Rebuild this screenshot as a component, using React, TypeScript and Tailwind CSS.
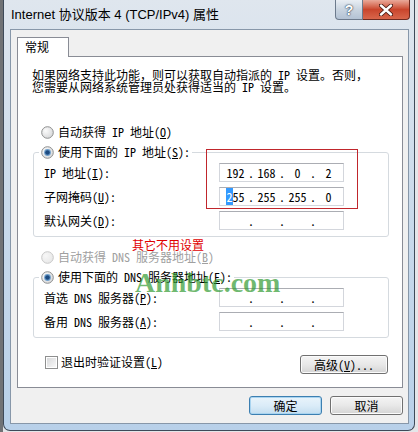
import { Fragment, type ReactNode } from "react";

// body text uses a half-width latin CJK face so "IP"/"DNS" get 6px cells
const ui = "font-['Noto_Sans_Mono_CJK_SC','Noto_Sans_CJK_SC',sans-serif] text-[12px] leading-[14px] text-black";

function Radio({ checked, disabled }: { checked?: boolean; disabled?: boolean }) {
  return (
    <svg width="13" height="13" viewBox="0 0 13 13" className="shrink-0">
      <defs>
        <radialGradient id={disabled ? "rgd" : "rg"} cx="0.35" cy="0.35" r="0.8">
          <stop offset="0" stopColor={disabled ? "#f7f7f7" : "#fbfbfb"} />
          <stop offset="1" stopColor={disabled ? "#e6e6e6" : "#d2d3d5"} />
        </radialGradient>
      </defs>
      <circle cx="6.5" cy="6.5" r="5.8" fill={`url(#${disabled ? "rgd" : "rg"})`} stroke={disabled ? "#c8c8c8" : "#8e8f8f"} strokeWidth="1" />
      {checked && (
        <>
          <circle cx="6.5" cy="6.5" r="3.4" fill="#6f9fcb" />
          <circle cx="6.5" cy="6.5" r="2.3" fill="#1b4a80" />
        </>
      )}
    </svg>
  );
}

function Check() {
  return (
    <div className="h-[13px] w-[13px] shrink-0 border border-[#8e8f8f] bg-white p-px">
      <div className="h-full w-full bg-linear-to-br from-[#d8d9db] to-[#f8f8f8]" />
    </div>
  );
}

function IpBox({ parts }: { parts?: ReactNode[] }) {
  const p = parts ?? ["", "", "", ""];
  return (
    <div className="flex h-[19px] w-[125px] items-center border border-[#d3d6dc] border-t-[#abadb3] bg-white pl-[3px]">
      {p.map((v, i) => (
        <Fragment key={i}>
          {i > 0 && <span className="w-[6px] text-center">.</span>}
          <span className="w-[25px] text-center">{v}</span>
        </Fragment>
      ))}
    </div>
  );
}

function Field({ label, parts }: { label: ReactNode; parts?: ReactNode[] }) {
  return (
    <div className="flex h-[19px] items-center">
      <span className="w-[175px]">{label}</span>
      <IpBox parts={parts} />
    </div>
  );
}

function Group({ legend, children }: { legend: ReactNode; children: ReactNode }) {
  return (
    <div className="ml-[15px] mt-[13px] w-[356px] rounded-[3px] border border-[#d5dadf] pb-[6px]">
      <div className="-mt-[8px] ml-[5px] flex h-[14px] w-fit items-center gap-[4px] bg-white px-[2px]">
        <Radio checked />
        <span>{legend}</span>
      </div>
      <div className="mt-[4px] flex flex-col gap-[5px] pl-[10px]">{children}</div>
    </div>
  );
}

function Button({ children, primary, className }: { children: ReactNode; primary?: boolean; className?: string }) {
  return (
    <div
      className={`flex h-[19px] items-center justify-center rounded-[3px] border ${
        primary
          ? "border-[#3c7fb1] bg-linear-to-b from-[#e9f4fb] via-[#dbecf8] to-[#c4def0] shadow-[inset_0_0_0_1px_#a9d4f0]"
          : "border-[#707070] bg-linear-to-b from-[#f4f4f4] via-[#e8e8e8] to-[#d4d4d4] shadow-[inset_0_0_0_1px_#fbfbfb]"
      } ${className ?? ""}`}
    >
      {children}
    </div>
  );
}

export default function App() {
  return (
    <div className="flex h-[432px] w-[418px] overflow-hidden bg-[#e4e6e9]">
      <div className="h-full w-[3px] bg-[#707275]" />

      {/* window frame */}
      <div className="flex h-[431px] w-[412px] flex-col rounded-b-[7px] border-x border-b border-[#3e4a59] bg-linear-to-b from-[#dfe6ee] via-[#c9daeb] to-[#b8d0e9]">
        {/* caption */}
        <div className="flex h-[29px] items-start">
          <span className="ml-[7px] mt-[7px] font-['Liberation_Sans','Noto_Sans_CJK_SC',sans-serif] text-[13px] leading-[15px] text-black">
            Internet 协议版本 4 (TCP/IPv4) 属性
          </span>
          <div className="ml-auto mr-[4px] flex">
            <div className="flex h-[20px] w-[28px] items-center justify-center rounded-bl-[4px] border border-t-0 border-[#6c7a8c] bg-linear-to-b from-[#e9eef4] via-[#c9d4e0] to-[#b3c2d4]">
              <span className="font-['Liberation_Sans',sans-serif] text-[14px] font-bold leading-none text-white [text-shadow:0_0_2px_#22364c,0_0_1px_#22364c]">
                ?
              </span>
            </div>
            <div className="flex h-[20px] w-[47px] items-center justify-center rounded-br-[4px] border border-l-0 border-t-0 border-[#6e2a20] bg-linear-to-b from-[#e9a99a] via-[#c9452c] to-[#d8664b]">
              <svg width="14" height="12" viewBox="0 0 14 12">
                <path d="M2 1.5 L12 10.5 M12 1.5 L2 10.5" stroke="#4a1a12" strokeWidth="4.2" strokeLinecap="round" />
                <path d="M2 1.5 L12 10.5 M12 1.5 L2 10.5" stroke="#ffffff" strokeWidth="2.4" strokeLinecap="round" />
              </svg>
            </div>
          </div>
        </div>

        {/* client area */}
        <div className={`ml-[6px] flex h-[395px] w-[399px] flex-col border border-[#8797a9] bg-[#f0f0f0] ${ui}`}>
          <div className="relative z-10 -mb-px ml-[6px] mt-[7px] h-[20px] w-[52px] border-x border-t border-[#898c95] bg-white pl-[7px] pt-[2px]">
            常规
          </div>

          <div className="relative ml-[6px] h-[332px] w-[386px] border border-[#898c95] bg-white">
            <p className="ml-[14px] mt-[12px] leading-[12px]">
              如果网络支持此功能，则可以获取自动指派的 IP 设置。否则，
              <br />
              您需要从网络系统管理员处获得适当的 IP 设置。
            </p>

            <div className="ml-[23px] mt-[32px] flex h-[14px] items-center gap-[4px]">
              <Radio />
              <span>
                自动获得 IP 地址(<u>O</u>)
              </span>
            </div>

            <Group legend={<>使用下面的 IP 地址(<u>S</u>):</>}>
              <Field label={<>IP 地址(<u>I</u>):</>} parts={["192", "168", "0", "2"]} />
              <Field
                label={<>子网掩码(<u>U</u>):</>}
                parts={[
                  <>
                    <span className="bg-[#3399ff] text-white">2</span>55
                  </>,
                  "255",
                  "255",
                  "0",
                ]}
              />
              <Field label={<>默认网关(<u>D</u>):</>} />
            </Group>

            <div className="ml-[23px] mt-[13px] flex h-[14px] items-center gap-[4px] text-[#a0a0a0]">
              <Radio disabled />
              <span>
                自动获得 DNS 服务器地址(<u>B</u>)
              </span>
            </div>

            <Group legend={<>使用下面的 DNS 服务器地址(<u>E</u>):</>}>
              <Field label={<>首选 DNS 服务器(<u>P</u>):</>} />
              <Field label={<>备用 DNS 服务器(<u>A</u>):</>} />
            </Group>

            <div className="ml-[27px] mt-[17px] flex w-[343px] items-start justify-between">
              <div className="flex items-center gap-[3px]">
                <Check />
                <span>
                  退出时验证设置(<u>L</u>)
                </span>
              </div>
              <Button className="w-[88px]">
                高级(<u>V</u>)...
              </Button>
            </div>

            {/* annotations laid over the form */}
            <div className="pointer-events-none absolute left-[188px] top-[92px] h-[60px] w-[152px] border border-[#c0262c]" />
            <span className="pointer-events-none absolute left-[114px] top-[181px] font-['Noto_Sans_CJK_SC',sans-serif] text-[12px] leading-[14px] text-[#e00000]">
              其它不用设置
            </span>
            <span className="pointer-events-none absolute left-[117px] top-[212px] font-['Liberation_Serif',serif] text-[28px] font-bold leading-[28px] text-[#2f9a2f]/70">
              Anhbtc.com
            </span>
          </div>

          <div className="mr-[5px] mt-[8px] flex justify-end gap-[8px]">
            <Button primary className="w-[73px]">
              确定
            </Button>
            <Button className="w-[73px]">取消</Button>
          </div>
        </div>
      </div>
    </div>
  );
}
